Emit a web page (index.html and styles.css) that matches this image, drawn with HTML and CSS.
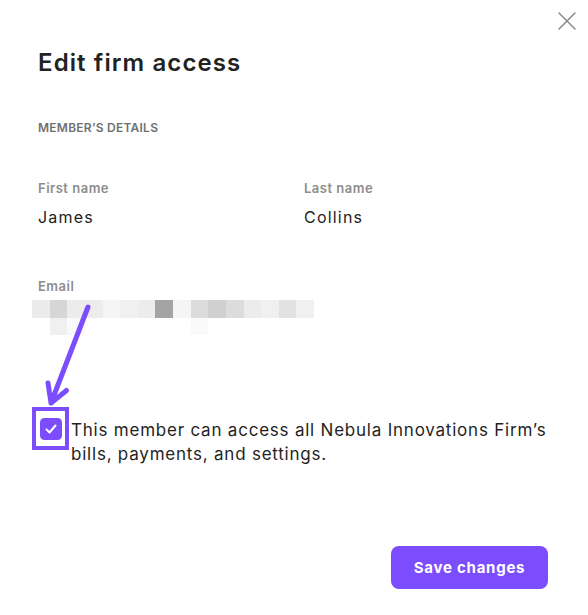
FILE: index.html
```html
<!DOCTYPE html>
<html lang="en">
<head>
<meta charset="utf-8">
<title>Edit firm access</title>
<link rel="stylesheet" href="styles.css">
</head>
<body>
<main class="dialog">
  <button class="close" aria-label="Close">
    <svg width="18" height="18" viewBox="0 0 18 18"><path d="M1 1 L17 17 M17 1 L1 17" stroke="#8c8c8c" stroke-width="1.6" stroke-linecap="round" fill="none"/></svg>
  </button>
  <h1 class="title">Edit firm access</h1>
  <h2 class="section">MEMBER’S DETAILS</h2>
  <div class="names">
    <div class="field">
      <div class="label">First name</div>
      <div class="value">James</div>
    </div>
    <div class="field">
      <div class="label">Last name</div>
      <div class="value">Collins</div>
    </div>
  </div>
  <div class="field email">
    <div class="label">Email</div>
    <div class="pixels">
      <span class="px c1"></span><span class="px c2"></span><span class="px c3"></span><span class="px c3"></span>
      <span class="px c4"></span><span class="px c5"></span><span class="px c3"></span><span class="px c6"></span>
      <span class="px c4"></span><span class="px c7"></span><span class="px c8"></span><span class="px c7"></span>
      <span class="px c3"></span><span class="px c5"></span><span class="px c9"></span><span class="px c5"></span>
      <span class="px c0"></span><span class="px c5"></span><span class="px c10"></span><span class="px c0"></span>
      <span class="px c0"></span><span class="px c0"></span><span class="px c0"></span><span class="px c0"></span>
      <span class="px c0"></span><span class="px c10"></span>
    </div>
  </div>
  <label class="consent">
    <span class="check">
      <svg width="22" height="22" viewBox="0 0 22 22"><rect width="22" height="22" rx="4.5" fill="#7b4dfd"/><path d="M6.5 11.5 L9.5 14.5 L15.5 7.5" stroke="#fff" stroke-width="2" stroke-linecap="round" stroke-linejoin="round" fill="none"/></svg>
      <span class="highlight"></span>
    </span>
    <span class="consent-text">This member can access all Nebula Innovations Firm’s bills, payments, and settings.</span>
  </label>
  <div class="actions">
    <button class="save">Save changes</button>
  </div>
  <svg class="arrow" width="588" height="615" viewBox="0 0 588 615"><path d="M88 307 L51 403 M66.5 390.5 L51 403 L48 383" stroke="#7b4dfd" stroke-width="5" stroke-linecap="round" stroke-linejoin="round" fill="none"/></svg>
</main>
</body>
</html>
```
FILE: styles.css
```css
* { box-sizing: border-box; }
html, body { margin: 0; padding: 0; background: #fff; }
body { font-family: Inter, "Open Sans", sans-serif; color: #1f1f1f; }
.dialog {
  position: relative;
  width: 588px;
  height: 615px;
  padding: 47px 40px 0 38px;
}
.close {
  position: absolute;
  top: 12px;
  left: 558px;
  padding: 0;
  border: 0;
  background: none;
  width: 18px;
  height: 18px;
}
.close svg { display: block; }
.title {
  margin: 0;
  font-size: 24px;
  line-height: 32px;
  font-weight: 600;
  color: #222;
  letter-spacing: 1.1px;
}
.section {
  margin: 41px 0 0;
  font-size: 12px;
  line-height: 16px;
  font-weight: 600;
  color: #707070;
  letter-spacing: 0.25px;
}
.names {
  display: grid;
  grid-template-columns: 266px 1fr;
  margin-top: 43px;
}
.label {
  font-size: 13px;
  line-height: 18px;
  font-weight: 600;
  color: #8d8d8d;
  letter-spacing: 0.5px;
}
.value {
  margin-top: 8px;
  font-size: 16px;
  line-height: 24px;
  color: #222;
  letter-spacing: 1.2px;
}
.email { margin-top: 48px; }
.pixels {
  display: grid;
  grid-template-columns: repeat(16, 17.625px);
  grid-auto-rows: 17.6px;
  margin: 5px 0 0 -6px;
  width: 282px;
}
.px { display: block; }
.c0 { background: #fff; }
.c1 { background: #ebebeb; }
.c2 { background: #d6d6d6; }
.c3 { background: #ececec; }
.c4 { background: #f5f5f5; }
.c5 { background: #f0f0f0; }
.c6 { background: #a4a4a4; }
.c7 { background: #dcdcdc; }
.c8 { background: #d0d0d0; }
.c9 { background: #e2e2e2; }
.c10 { background: #fafafa; }
.consent {
  display: flex;
  align-items: flex-start;
  gap: 9px;
  margin: 83px 0 0 2px;
}
.check {
  position: relative;
  flex: none;
  width: 22px;
  height: 22px;
}
.check svg { display: block; }
.highlight {
  position: absolute;
  left: -8px;
  top: -11px;
  width: 37px;
  height: 43px;
  border: 4px solid #7b4dfd;
}
.consent-text {
  width: 490px;
  font-size: 17px;
  line-height: 24px;
  color: #1f1f1f;
  letter-spacing: 0.78px;
}
.actions {
  display: flex;
  justify-content: flex-end;
  margin-top: 80px;
}
.save {
  width: 157px;
  height: 43px;
  border: 0;
  border-radius: 8px;
  background: #7b4dfd;
  color: #fff;
  font-family: Inter, "Open Sans", sans-serif;
  font-size: 15px;
  font-weight: 700;
  letter-spacing: 0.75px;
  padding: 0;
}
.arrow {
  position: absolute;
  left: 0;
  top: 0;
  pointer-events: none;
}
```
